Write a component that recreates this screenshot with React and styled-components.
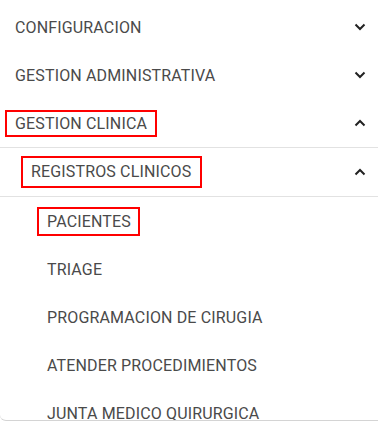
import React from 'react';
import styled, { createGlobalStyle } from 'styled-components';

const GlobalStyle = createGlobalStyle`
  body {
    margin: 0;
    background: #fff;
    font-family: Roboto, "Liberation Sans", sans-serif;
  }
`;

// pad = vertical padding inside the red mark, then right padding
const menu = [
  { label: 'CONFIGURACION', level: 0, icon: 'down' },
  { label: 'GESTION ADMINISTRATIVA', level: 0, icon: 'down' },
  { label: 'GESTION CLINICA', level: 0, icon: 'up', pad: [2, 2, 8], divider: true },
  { label: 'REGISTROS CLINICOS', level: 1, icon: 'up', pad: [4, 5, 9], divider: true },
  { label: 'PACIENTES', level: 2, pad: [3, 3, 7] },
  { label: 'TRIAGE', level: 2 },
  { label: 'PROGRAMACION DE CIRUGIA', level: 2 },
  { label: 'ATENDER PROCEDIMIENTOS', level: 2 },
  { label: 'JUNTA MEDICO QUIRURGICA', level: 2 },
];

const Chevron = ({ dir }) => (
  <svg width="12" height="8" viewBox="0 0 12 8">
    <polyline
      points={dir === 'up' ? '1.5,6.5 6,2 10.5,6.5' : '1.5,1.5 6,6 10.5,1.5'}
      fill="none"
      stroke="#222"
      strokeWidth="2"
    />
  </svg>
);

const App = () => (
  <>
    <GlobalStyle />
    <Card>
      {menu.map(item => (
        <Row key={item.label} $level={item.level} $divider={item.divider}>
          {item.pad ? (
            <Marked $top={item.pad[0]} $bottom={item.pad[1]} $right={item.pad[2]}>
              {item.label}
            </Marked>
          ) : (
            <Label>{item.label}</Label>
          )}
          {item.icon && (
            <Icon>
              <Chevron dir={item.icon} />
            </Icon>
          )}
        </Row>
      ))}
    </Card>
  </>
);

export default App;

const Card = styled.div`
  height: 421px;
  padding-top: 3px;
  box-sizing: border-box;
  overflow: hidden;
  border-bottom: 1px solid #d4d4d4;
  border-bottom-left-radius: 6px;
  box-shadow: -1px 0 0 -0.5px #f4f4f4;
  background: #fff;
`;

const Row = styled.div`
  height: 48px;
  display: flex;
  align-items: center;
  justify-content: space-between;
  padding-left: ${props => [15, 31, 47][props.$level]}px;
  padding-right: 12px;
  border-bottom: ${props => (props.$divider ? '1px solid #e2e2e2' : 'none')};
`;

const Label = styled.span`
  font-size: 16px;
  font-weight: 400;
  color: #4a4a4a;
  line-height: 19px;
  letter-spacing: 0.15px;
  white-space: nowrap;
`;

const Marked = styled(Label)`
  margin-left: -10px;
  padding: ${props => `${props.$top}px ${props.$right}px ${props.$bottom}px 8px`};
  border: 2px solid #f00;
`;

const Icon = styled.div`
  display: flex;
  align-items: center;
  justify-content: center;
  width: 12px;
`;
